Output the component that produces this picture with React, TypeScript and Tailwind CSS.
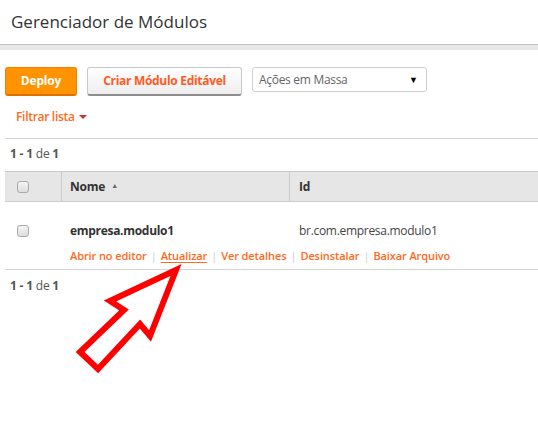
import React from "react";

const font = { fontFamily: '"Open Sans", "Liberation Sans", sans-serif' };

const Checkbox = () => (
  <span className="inline-block w-[12px] h-[12px] rounded-[3px] border border-[#a9a9a9] bg-gradient-to-b from-[#f4f4f4] to-[#dedede]" />
);

const Count = () => (
  <p className="text-[12px] text-[#555] tracking-[-0.2px]">
    <b className="font-bold">1 - 1</b> de <b className="font-bold">1</b>
  </p>
);

const actions = ["Abrir no editor", "Atualizar", "Ver detalhes", "Desinstalar", "Baixar Arquivo"];

export default function App() {
  return (
    <div className="relative w-[538px] h-[444px] bg-white overflow-hidden" style={font}>
      <header className="h-[44px] flex items-center pl-[11px]">
        <h1 className="text-[17px] text-[#333]">Gerenciador de Módulos</h1>
      </header>
      <div className="h-[1px] bg-[#c4c4c4]" />
      <div className="h-[5px] bg-[#e8e8e8]" />

      <div className="flex items-start gap-[10px] pl-[5px] mt-[17px]">
        <button className="w-[72px] h-[29px] rounded-[3px] bg-[#ff9400] border border-[#f08000] border-b-[2px] border-b-[#e06f00] text-white font-bold text-[12px] tracking-[-0.2px]">
          Deploy
        </button>
        <button className="w-[155px] h-[29px] rounded-[3px] bg-gradient-to-b from-white to-[#eeeeee] border border-[#c9c9c9] border-b-[2px] border-b-[#8d8d8d] text-[#ff5a1f] font-bold text-[12px] tracking-[-0.3px]">
          Criar Módulo Editável
        </button>
        <div className="w-[175px] h-[25px] rounded-[3px] border border-[#cfcfcf] flex items-center justify-between pl-[6px] pr-[8px]">
          <span className="text-[12px] text-[#666] tracking-[-0.3px]">Ações em Massa</span>
          <span className="text-[9px] text-black">▼</span>
        </div>
      </div>

      <div className="pl-[16px] mt-[12px] h-[30px] flex items-start">
        <span className="text-[12px] font-semibold text-[#ff6a1a] tracking-[-0.3px] flex items-center gap-[4px]">
          Filtrar lista
          <span className="inline-block w-0 h-0 border-l-[4px] border-r-[4px] border-t-[4px] border-l-transparent border-r-transparent border-t-[#d2322d]" />
        </span>
      </div>
      <div className="ml-[5px] h-[1px] bg-[#d4d4d4]" />

      <div className="pl-[10px] h-[32px] flex items-center pb-[2px]">
        <Count />
      </div>

      <div className="ml-[5px]">
        <div className="flex h-[31px] bg-[#e6e6e6] border-t border-b border-[#cccccc] text-[12px] font-bold text-[#333] tracking-[-0.2px]">
          <div className="w-[57px] flex items-center pl-[12px] border-r border-[#cccccc]">
            <Checkbox />
          </div>
          <div className="w-[228px] flex items-center pl-[8px] border-r border-[#cccccc] gap-[6px]">
            Nome <span className="text-[7px] text-[#666] font-normal">▲</span>
          </div>
          <div className="flex-1 flex items-center pl-[9px]">Id</div>
        </div>

        <div className="flex h-[68px] border-b border-[#d4d4d4] text-[12px] tracking-[-0.3px]">
          <div className="w-[57px] pl-[12px] pt-[22px]">
            <Checkbox />
          </div>
          <div className="flex-1 pl-[8px] pt-[20px]">
            <div className="flex">
              <span className="w-[229px] font-bold text-[#333]">empresa.modulo1</span>
              <span className="text-[#444]">br.com.empresa.modulo1</span>
            </div>
            <div className="flex items-center mt-[8px] text-[11px] font-semibold text-[#ff6a1a] tracking-[-0.1px]">
              {actions.map((a, i) => (
                <React.Fragment key={a}>
                  {i > 0 && <span className="mx-[4px] text-[#ccc] font-normal">|</span>}
                  <span className={a === "Atualizar" ? "underline underline-offset-2" : ""}>{a}</span>
                </React.Fragment>
              ))}
            </div>
          </div>
        </div>
      </div>

      <div className="pl-[10px] h-[32px] flex items-center">
        <Count />
      </div>

      <svg className="absolute left-0 top-0 pointer-events-none" width="538" height="444">
        <polygon
          points="176,270 110,301 124,310 80,352 98,369 140,324 150,336"
          fill="white"
          stroke="#ff0000"
          strokeWidth="6"
          strokeLinejoin="miter"
        />
      </svg>
    </div>
  );
}
